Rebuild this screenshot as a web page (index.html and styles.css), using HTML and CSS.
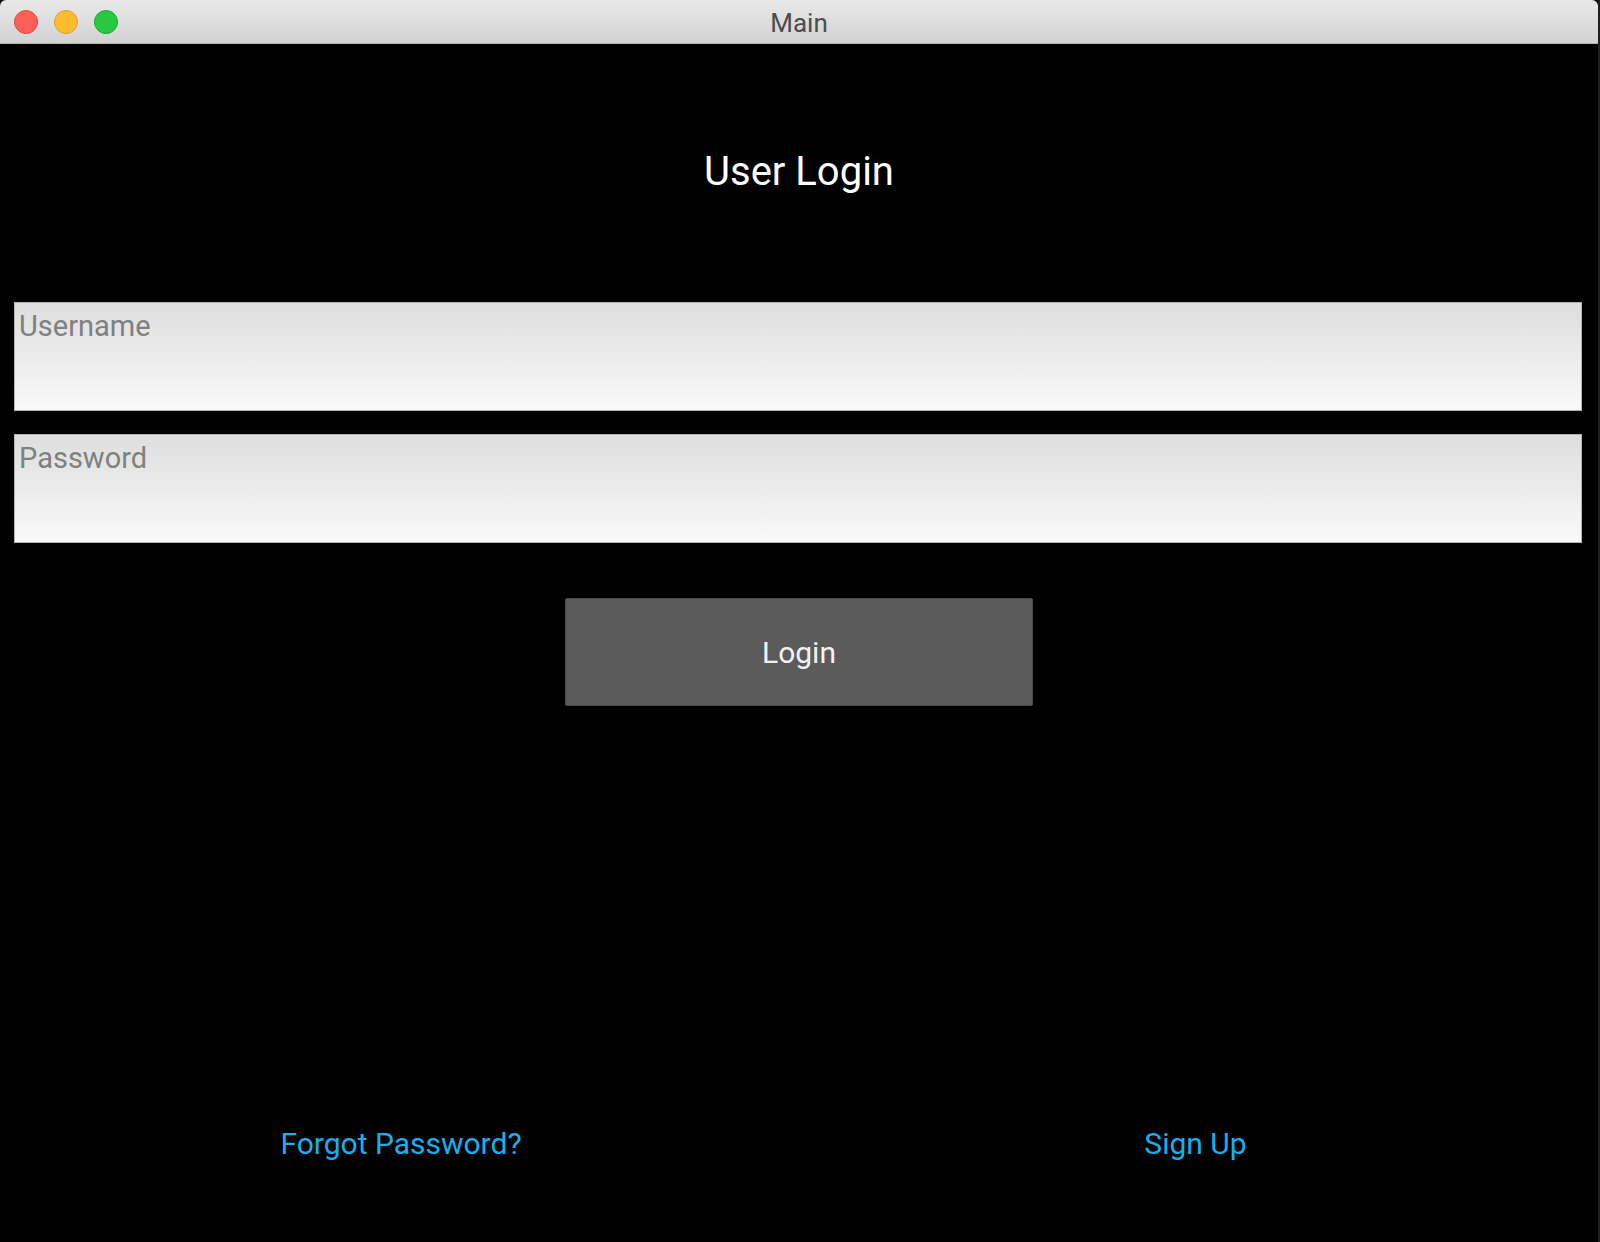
FILE: index.html
```html
<!DOCTYPE html>
<html lang="en">
<head>
<meta charset="utf-8">
<title>Main</title>
<link rel="stylesheet" href="styles.css">
</head>
<body>
<div class="window">
  <div class="titlebar">
    <div class="lights">
      <span class="light red"></span>
      <span class="light yellow"></span>
      <span class="light green"></span>
    </div>
    <div class="wintitle">Main</div>
  </div>
  <main class="content">
    <h1 class="heading">User Login</h1>
    <form class="form">
      <input class="field" type="text" placeholder="Username">
      <input class="field" type="password" placeholder="Password">
      <button class="login" type="button">Login</button>
    </form>
    <div class="links">
      <div class="link-cell"><a class="link forgot" href="#">Forgot Password?</a></div>
      <div class="link-cell"><a class="link signup" href="#">Sign Up</a></div>
    </div>
  </main>
</div>
</body>
</html>
```

FILE: styles.css
```css
html, body {
  margin: 0;
  padding: 0;
  height: 100%;
}
body {
  background: #1c1f26;
  font-family: Roboto, "Noto Sans", sans-serif;
}
.window {
  width: 1598px;
  height: 1242px;
  display: flex;
  flex-direction: column;
  background: #000;
}
.titlebar {
  position: relative;
  height: 44px;
  box-sizing: border-box;
  flex: 0 0 auto;
  background: linear-gradient(#e9e9e9, #d2d2d2);
  border-bottom: 1px solid #b2b2b2;
  border-radius: 6px 6px 0 0;
  display: flex;
  align-items: center;
  justify-content: center;
}
.lights {
  position: absolute;
  left: 14px;
  top: 10px;
  display: flex;
  gap: 16px;
}
.light {
  width: 24px;
  height: 24px;
  border-radius: 50%;
  box-sizing: border-box;
}
.red { background: #fd5f57; border: 1px solid #e2463f; }
.yellow { background: #fdbc2e; border: 1px solid #e0a028; }
.green { background: #28c940; border: 1px solid #17ab2b; }
.wintitle {
  font-size: 26px;
  color: #4c4c4c;
  line-height: 30px;
  margin-top: 2px;
}
.content {
  flex: 1 1 auto;
  display: flex;
  flex-direction: column;
  padding-top: 104px;
}
.heading {
  margin: 0;
  font-weight: 400;
  font-size: 40px;
  line-height: 48px;
  color: #fff;
  text-align: center;
}
.form {
  margin-top: 106px;
  padding: 0 16px 0 14px;
  display: flex;
  flex-direction: column;
  gap: 23px;
}
.field {
  box-sizing: border-box;
  height: 109px;
  width: 100%;
  margin: 0;
  border: 1px solid #b4b4b4;
  background: linear-gradient(#dedede, #f9f9f9);
  padding: 6px 5px 67px 4px;
  font-family: Roboto, "Noto Sans", sans-serif;
  font-size: 29px;
  line-height: 34px;
  color: #333;
  outline: none;
}
.field::placeholder {
  color: #808080;
  opacity: 1;
}
.login {
  align-self: center;
  margin-top: 32px;
  width: 468px;
  height: 108px;
  box-sizing: border-box;
  border: 1px solid #4a4a4a;
  border-radius: 2px;
  background: #5b5b5b;
  color: #f2f2f2;
  font-family: Roboto, "Noto Sans", sans-serif;
  font-size: 30px;
  padding: 0;
  position: relative;
  left: 1px;
}
.links {
  margin-top: auto;
  padding-bottom: 80px;
  display: flex;
}
.link-cell {
  flex: 1 1 0;
  text-align: center;
}
.link {
  font-size: 30px;
  line-height: 36px;
  color: #18aff0;
  text-decoration: none;
}
.forgot {
  margin-left: 3px;
}
.signup {
  margin-right: 6px;
}
```
